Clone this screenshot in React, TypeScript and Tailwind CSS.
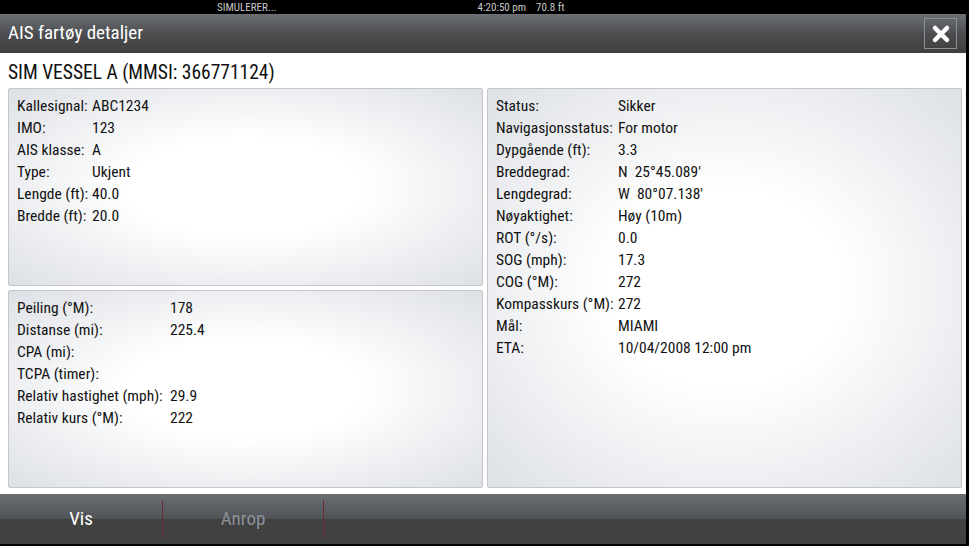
import { X } from "lucide-react";

type Row = [string, string];

const vessel: Row[] = [
  ["Kallesignal:", "ABC1234"],
  ["IMO:", "123"],
  ["AIS klasse:", "A"],
  ["Type:", "Ukjent"],
  ["Lengde (ft):", "40.0"],
  ["Bredde (ft):", "20.0"],
];

const relative: Row[] = [
  ["Peiling (°M):", "178"],
  ["Distanse (mi):", "225.4"],
  ["CPA (mi):", ""],
  ["TCPA (timer):", ""],
  ["Relativ hastighet (mph):", "29.9"],
  ["Relativ kurs (°M):", "222"],
];

const status: Row[] = [
  ["Status:", "Sikker"],
  ["Navigasjonsstatus:", "For motor"],
  ["Dypgående (ft):", "3.3"],
  ["Breddegrad:", "N  25°45.089'"],
  ["Lengdegrad:", "W  80°07.138'"],
  ["Nøyaktighet:", "Høy (10m)"],
  ["ROT (°/s):", "0.0"],
  ["SOG (mph):", "17.3"],
  ["COG (°M):", "272"],
  ["Kompasskurs (°M):", "272"],
  ["Mål:", "MIAMI"],
  ["ETA:", "10/04/2008 12:00 pm"],
];

const font = "font-['Liberation_Sans_Narrow','Roboto_Condensed','Roboto',sans-serif]";

// one framed info box with a two column label/value list
const Panel = ({ rows, labelCol }: { rows: Row[]; labelCol: string }) => (
  <div className="flex-1 rounded-[2px] border border-[#c3c6ca] bg-[radial-gradient(ellipse_at_center,#ffffff_35%,#dde0e5_100%)] pl-2 pt-[6px]">
    <div className={`grid ${labelCol} text-[15.5px] leading-[22px] text-[#111]`}>
      {rows.map(([label, value]) => (
        <div key={label} className="contents">
          <span className="whitespace-nowrap">{label}</span>
          <span className="whitespace-pre">{value}</span>
        </div>
      ))}
    </div>
  </div>
);

const App = () => {
  return (
    <div className={`flex h-[546px] w-[969px] flex-col overflow-hidden bg-black ${font}`}>
      {/* status strip */}
      <div className="flex h-[14px] items-center text-[11px] leading-none text-[#c9c9c9]">
        <span className="ml-[217px]">SIMULERER...</span>
        <span className="ml-[201px]">4:20:50 pm</span>
        <span className="ml-[10px]">70.8 ft</span>
      </div>

      <div className="flex flex-1 flex-col pb-[2px] pr-[3px]">
        {/* title bar */}
        <div className="flex h-[39px] items-center justify-between bg-[linear-gradient(#6c7076,#4a4b4d_55%,#3f3f3f)] pl-2 pr-[9px]">
          <h1 className="text-[19px] text-white">AIS fartøy detaljer</h1>
          <button className="flex h-[31px] w-[33px] items-center justify-center border border-[#8d9094]">
            <X className="h-6 w-6 text-white" strokeWidth={4.5} />
          </button>
        </div>

        {/* content */}
        <div className="flex flex-1 flex-col bg-white pb-[6px] pl-2 pr-1">
          <h2 className="flex h-[35px] items-center pt-1 text-[19.5px] text-[#111]">SIM VESSEL A (MMSI: 366771124)</h2>
          <div className="flex flex-1 gap-1">
            <div className="flex flex-1 flex-col gap-1">
              <Panel rows={vessel} labelCol="grid-cols-[75px_1fr]" />
              <Panel rows={relative} labelCol="grid-cols-[153px_1fr]" />
            </div>
            <div className="flex flex-1 flex-col">
              <Panel rows={status} labelCol="grid-cols-[122px_1fr]" />
            </div>
          </div>
        </div>

        {/* soft keys */}
        <div className="flex h-[50px] bg-[linear-gradient(#6a6e74,#505356_50%,#414141_50%,#404040)]">
          <div className="flex w-[162px] items-center justify-center text-[19px] text-white">Vis</div>
          <div className="my-[6px] border-l border-[#6e2a31]" />
          <div className="flex w-[160px] items-center justify-center text-[19px] text-[#8b9198]">Anrop</div>
          <div className="my-[6px] border-l border-[#6e2a31]" />
        </div>
      </div>
    </div>
  );
};

export default App;
